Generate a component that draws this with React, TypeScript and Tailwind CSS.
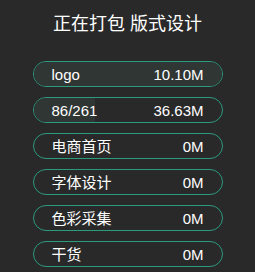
const items = [
    { name: "logo", size: "10.10M", progress: 100 },
    { name: "86/261", size: "36.63M", progress: (86 / 261) * 100 },
    { name: "电商首页", size: "0M", progress: 0 },
    { name: "字体设计", size: "0M", progress: 0 },
    { name: "色彩采集", size: "0M", progress: 0 },
    { name: "干货", size: "0M", progress: 0 },
];

function App() {
    return (
        <div
            className="w-[255px] h-[272px] bg-[#292929] overflow-hidden text-white"
            style={{ fontFamily: '"Liberation Sans", "Noto Sans CJK SC", sans-serif' }}>
            <h1 className="pt-[13px] text-center text-[18px] leading-[22px] font-normal">
                正在打包 版式设计
            </h1>
            <div className="mt-[26px] flex flex-col items-center gap-[10px]">
                {items.map((item) => (
                    <div
                        key={item.name}
                        className="relative w-[190px] h-[26px] rounded-full border border-[#2b9a7d] overflow-hidden">
                        <div
                            className="absolute left-0 top-0 bottom-0 bg-[#303634]"
                            style={{ width: `${item.progress}%` }}
                        />
                        <div className="relative flex h-full items-center justify-between pl-[18px] pr-[18px] text-[15px] leading-none">
                            <span>{item.name}</span>
                            <span>{item.size}</span>
                        </div>
                    </div>
                ))}
            </div>
        </div>
    );
}

export default App;
